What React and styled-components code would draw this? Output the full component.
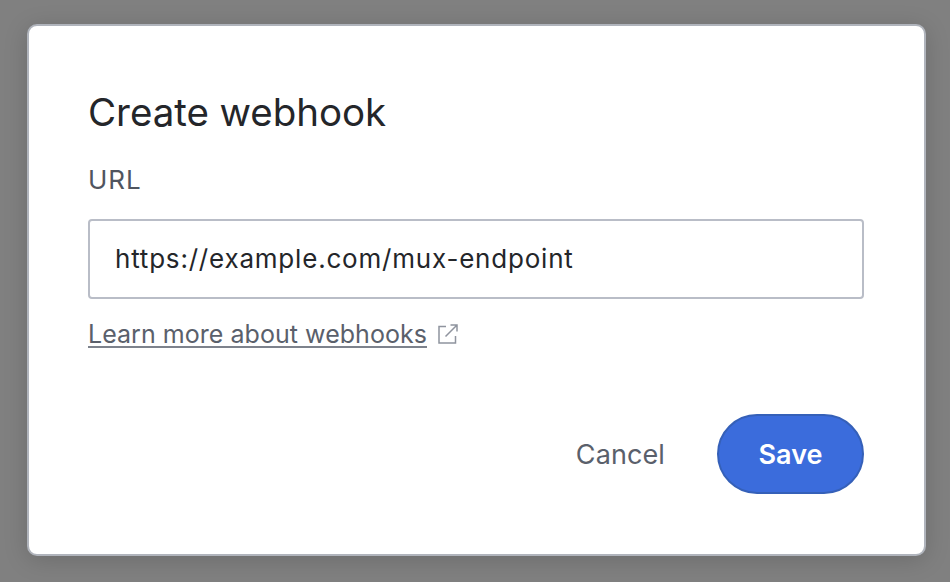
import React from "react";
import styled, { createGlobalStyle } from "styled-components";

const Global = createGlobalStyle`
  html, body { margin: 0; padding: 0; }
  body { background: #808080; font-family: "Inter", "Liberation Sans", sans-serif; }
`;

const Backdrop = styled.div`
  width: 950px;
  height: 582px;
  box-sizing: border-box;
  padding: 24px 24px 26px 27px;
  background: #808080;
  overflow: hidden;
`;

const Dialog = styled.form`
  box-sizing: border-box;
  width: 899px;
  height: 532px;
  padding: 62px 60px 60px 59px;
  background: #fff;
  border: 2px solid #b0b4bc;
  border-radius: 10px;
  box-shadow: 0 4px 24px rgba(0, 0, 0, 0.16);
  display: flex;
  flex-direction: column;
`;

const Title = styled.h2`
  margin: 0;
  font-size: 38.5px;
  line-height: 48px;
  font-weight: 400;
  color: #24262a;
  letter-spacing: -0.05px;
`;

const Label = styled.label`
  margin-top: 27px;
  font-size: 26px;
  line-height: 34px;
  letter-spacing: 1px;
  color: #50555f;
`;

const Input = styled.div`
  box-sizing: border-box;
  margin-top: 22px;
  height: 80px;
  padding: 0 25px 2px;
  display: flex;
  align-items: center;
  border: 2px solid #b9bdc7;
  border-radius: 4px;
  font-size: 26px;
  letter-spacing: 0.8px;
  color: #24262a;
`;

const HelpRow = styled.div`
  margin-top: 18px;
  display: flex;
  align-items: center;
  gap: 11px;
  color: #5a606b;
`;

const HelpLink = styled.a`
  font-size: 25px;
  line-height: 34px;
  color: #5a606b;
  letter-spacing: 0.04px;
  text-decoration: underline;
  text-decoration-color: #7d828c;
  text-decoration-thickness: 2px;
  text-underline-offset: 3px;
`;

const Actions = styled.div`
  margin-top: auto;
  display: flex;
  justify-content: flex-end;
  align-items: center;
  gap: 52px;
`;

const Cancel = styled.button`
  border: none;
  padding: 0;
  background: none;
  font: inherit;
  font-size: 27px;
  letter-spacing: 0.1px;
  color: #5a606b;
`;

const Save = styled.button`
  box-sizing: border-box;
  width: 147px;
  height: 80px;
  border: 2px solid #3560b8;
  border-radius: 40px;
  background: #3b6cdc;
  font: inherit;
  font-size: 27px;
  font-weight: 600;
  color: #fff;
`;

export default function App() {
  return (
    <>
      <Global />
      <Backdrop>
        <Dialog onSubmit={(e) => e.preventDefault()}>
          <Title>Create webhook</Title>
          <Label>URL</Label>
          <Input>https://example.com/mux-endpoint</Input>
          <HelpRow>
            <HelpLink>Learn more about webhooks</HelpLink>
            <svg width="20" height="20" viewBox="0 0 20 20" fill="none" stroke="#8f949e" strokeWidth="1.5">
              <path d="M8 2.5H1v16.5h16.5V12" />
              <path d="M7.5 12.5 19 1M12.5 1H19v6.5" />
            </svg>
          </HelpRow>
          <Actions>
            <Cancel type="button">Cancel</Cancel>
            <Save type="submit">Save</Save>
          </Actions>
        </Dialog>
      </Backdrop>
    </>
  );
}
